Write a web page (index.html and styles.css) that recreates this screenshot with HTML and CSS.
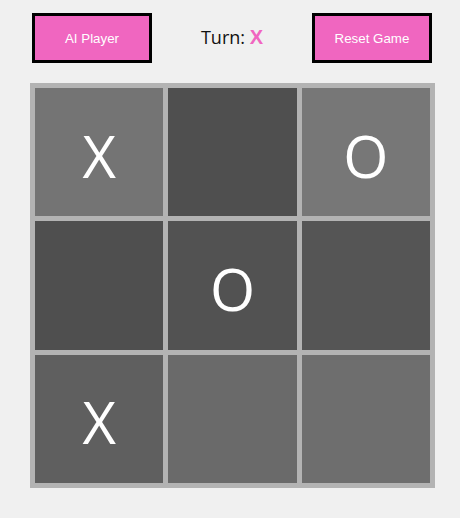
FILE: index.html
```html
<!DOCTYPE html>
<html>
<head>
<meta charset="utf-8">
<link rel="stylesheet" href="styles.css">
</head>
<body>
<div class="app">
  <div class="topbar">
    <button class="btn">AI Player</button>
    <div class="turn">Turn: <span class="turn-mark">X</span></div>
    <button class="btn">Reset Game</button>
  </div>
  <div class="board">
    <div class="cell c1">X</div>
    <div class="cell c2"></div>
    <div class="cell c3">O</div>
    <div class="cell c4"></div>
    <div class="cell c5">O</div>
    <div class="cell c6"></div>
    <div class="cell c7">X</div>
    <div class="cell c8"></div>
    <div class="cell c9"></div>
  </div>
</div>
</body>
</html>
```
FILE: styles.css
```css
html, body {
  margin: 0;
  padding: 0;
  background: #f0f0f0;
}
.app {
  padding: 13px 0 0 30px;
  width: 405px;
}
.topbar {
  display: flex;
  justify-content: space-between;
  align-items: center;
  padding: 0 3px 0 2px;
  height: 50px;
}
.btn {
  box-sizing: border-box;
  width: 120px;
  height: 50px;
  background: #f066c0;
  border: 3px solid #000;
  color: #fff;
  font-family: "Liberation Sans", Arial, sans-serif;
  font-size: 13.333px;
  padding: 0;
  margin: 0;
}
.turn {
  font-family: "Open Sans", "Noto Sans", sans-serif;
  font-size: 18px;
  color: #111;
  padding-bottom: 2px;
}
.turn-mark {
  color: #f066c0;
  font-weight: 800;
  font-family: "Liberation Sans", Arial, sans-serif;
  font-size: 20px;
}
.board {
  margin-top: 20px;
  box-sizing: border-box;
  width: 405px;
  height: 405px;
  background: #b3b3b3;
  padding: 5px;
  display: grid;
  grid-template-columns: repeat(3, 1fr);
  grid-template-rows: repeat(3, 1fr);
  gap: 5px;
}
.cell {
  display: flex;
  align-items: center;
  justify-content: center;
  color: #fff;
  font-family: "Open Sans", "Noto Sans", sans-serif;
  font-size: 58px;
  padding-top: 6px;
  box-sizing: border-box;
}
.c1 { background: #747474; }
.c2 { background: #4f4f4f; }
.c3 { background: #777777; }
.c4 { background: #4f4f4f; }
.c5 { background: #525252; }
.c6 { background: #555555; }
.c7 { background: #5f5f5f; }
.c8 { background: #6a6a6a; }
.c9 { background: #6e6e6e; }
```
